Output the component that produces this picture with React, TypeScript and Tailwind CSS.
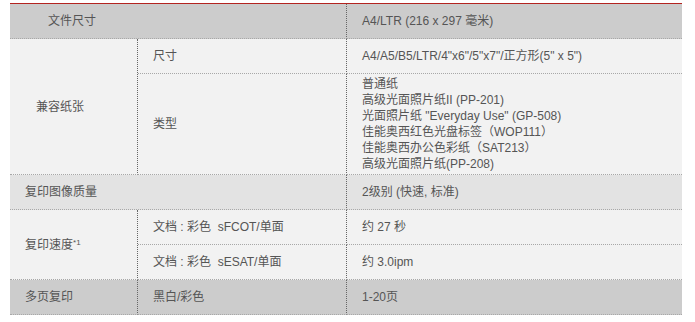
type Row = { label: string; value: string };

const paperTypes = [
  "普通纸",
  "高级光面照片纸II (PP-201)",
  "光面照片纸 \"Everyday Use\" (GP-508)",
  "佳能奥西红色光盘标签（WOP111）",
  "佳能奥西办公色彩纸（SAT213）",
  "高级光面照片纸(PP-208)",
];

const speedRows: Row[] = [
  { label: "文档 : 彩色\u00a0 sFCOT/单面", value: "约 27 秒" },
  { label: "文档 : 彩色\u00a0 sESAT/单面", value: "约 3.0ipm" },
];

function App() {
  const cell = "border-b border-dotted border-b-[#a8a8a8] align-middle";
  const divider = "border-r border-r-[#666666]";

  return (
    <div
      className="min-h-screen bg-white pt-[3px] pl-[10px] text-[12px] text-[#555555]"
      style={{ fontFamily: '"Liberation Sans", "Noto Sans CJK SC", sans-serif' }}
    >
      <table className="w-[672px] table-fixed border-separate border-spacing-0 border-t border-t-[#b32420]">
        <colgroup>
          <col className="w-[128px]" />
          <col className="w-[209px]" />
          <col className="w-[335px]" />
        </colgroup>
        <tbody>
          <tr className="bg-[#cccccc]">
            <td colSpan={2} className={`${cell} ${divider} h-[35px] pl-[38px]`}>
              文件尺寸
            </td>
            <td className={`${cell} pl-[15px]`}>A4/LTR (216 x 297 毫米)</td>
          </tr>

          <tr className="bg-[#f2f2f2]">
            <td rowSpan={2} className={`${cell} ${divider} pl-[26px]`}>
              兼容纸张
            </td>
            <td className={`${cell} ${divider} h-[35px] pl-[15px]`}>尺寸</td>
            <td className={`${cell} pl-[15px]`}>A4/A5/B5/LTR/4"x6"/5"x7"/正方形(5" x 5")</td>
          </tr>
          <tr className="bg-[#f2f2f2]">
            <td className={`${cell} ${divider} h-[101px] pl-[15px]`}>类型</td>
            <td className={`${cell} pl-[15px] leading-4`}>
              {paperTypes.map((t) => (
                <div key={t}>{t}</div>
              ))}
            </td>
          </tr>

          <tr className="bg-[#e3e3e3]">
            <td colSpan={2} className={`${cell} ${divider} h-[35px] pl-[15px]`}>
              复印图像质量
            </td>
            <td className={`${cell} pl-[15px]`}>2级别 (快速, 标准)</td>
          </tr>

          {speedRows.map((r, i) => (
            <tr key={r.label} className="bg-[#f2f2f2]">
              {i === 0 && (
                <td rowSpan={2} className={`${cell} ${divider} pl-[15px]`}>
                  复印速度<sup className="text-[8px]">*1</sup>
                </td>
              )}
              <td className={`${cell} ${divider} h-[35px] pl-[15px]`}>{r.label}</td>
              <td className={`${cell} pl-[15px]`}>{r.value}</td>
            </tr>
          ))}

          <tr className="bg-[#cccccc]">
            <td className={`${cell} ${divider} h-[35px] pl-[15px]`}>多页复印</td>
            <td className={`${cell} ${divider} pl-[15px]`}>黑白/彩色</td>
            <td className={`${cell} pl-[15px]`}>1-20页</td>
          </tr>
        </tbody>
      </table>
    </div>
  );
}

export default App;
